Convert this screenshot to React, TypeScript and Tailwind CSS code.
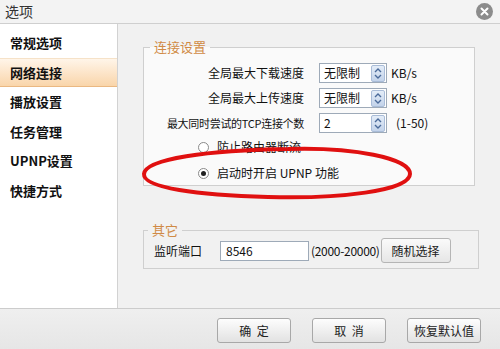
import React from "react";

const cjk = { fontFamily: '"Noto Sans CJK SC", "Liberation Sans", sans-serif' };

function Spinner() {
  return (
    <div className="flex h-[17px] w-[14px] flex-col items-center justify-center rounded-[2px] border border-[#a9bcd8] bg-gradient-to-b from-[#e4edf8] to-[#c3d3ea]">
      <svg width="8" height="13" viewBox="0 0 8 13">
        <path d="M1 5 L4 2 L7 5" fill="none" stroke="#4a6a9a" strokeWidth="1.4" />
        <path d="M1 8 L4 11 L7 8" fill="none" stroke="#4a6a9a" strokeWidth="1.4" />
      </svg>
    </div>
  );
}

function SpinBox({ value }: { value: string }) {
  return (
    <div className="flex h-[20px] w-[68px] items-center justify-between border border-[#9eaab8] bg-white pl-[4px] pr-[1px] text-[12px] text-[#111]">
      <span>{value}</span>
      <Spinner />
    </div>
  );
}

function Radio({ checked, label }: { checked?: boolean; label: string }) {
  return (
    <div className="flex items-center gap-[8px] pl-[54px] text-[12px] text-[#111]">
      <div className="flex h-[11px] w-[11px] items-center justify-center rounded-full border border-[#8a8a8a] bg-white">
        {checked && <div className="h-[5px] w-[5px] rounded-full bg-[#222]" />}
      </div>
      <span>{label}</span>
    </div>
  );
}

function Button({ children }: { children: React.ReactNode }) {
  return (
    <button className="flex h-[25px] w-[74px] items-center justify-center rounded-[3px] border border-[#a8a8a8] bg-gradient-to-b from-[#fdfdfd] to-[#e2e2e2] text-[12px] text-[#222]">
      {children}
    </button>
  );
}

export default function App() {
  const menu = ["常规选项", "网络连接", "播放设置", "任务管理", "UPNP设置", "快捷方式"];

  return (
    <div className="relative h-[349px] w-[500px] overflow-hidden bg-[#ececec]" style={cjk}>
      {/* Title bar */}
      <div className="flex h-[24px] items-center justify-between border-b border-[#cfcfcf] bg-[#f3f3f3] pl-[5px] pr-[7px]">
        <span className="text-[14px] text-[#333]">选项</span>
        <div className="flex h-[17px] w-[17px] items-center justify-center rounded-full bg-[#8c8c8c]">
          <svg width="9" height="9" viewBox="0 0 9 9">
            <path d="M1.5 1.5 L7.5 7.5 M7.5 1.5 L1.5 7.5" stroke="#fff" strokeWidth="2" strokeLinecap="round" />
          </svg>
        </div>
      </div>

      {/* Body */}
      <div className="flex h-[285px] border-b border-[#cccccc]">
        {/* Sidebar */}
        <div className="flex w-[118px] flex-col border-r border-[#d2d2d2] bg-white pt-[4px]">
          {menu.map((item) => (
            <div
              key={item}
              className={`flex h-[29.5px] items-center pl-[10px] text-[13px] font-bold text-[#111] ${
                item === "网络连接"
                  ? "border-y border-t-[#f6e2c8] border-b-[#eab882] bg-gradient-to-b from-[#fff5e9] to-[#f9d5aa]"
                  : ""
              }`}
            >
              {item}
            </div>
          ))}
        </div>

        {/* Content */}
        <div className="flex flex-1 flex-col bg-[#f1f1f1] pl-[25px] pt-[16px]">
          <fieldset className="h-[146px] w-[332px] border border-[#cfcfcf] bg-[#fafafa] px-0">
            <legend className="ml-[6px] px-[4px] text-[13px] leading-[14px] text-[#d08a45]">连接设置</legend>
            <div className="flex flex-col gap-[5px] pt-[9px]">
              {[
                { label: "全局最大下载速度", value: "无限制", unit: "KB/s", tight: false },
                { label: "全局最大上传速度", value: "无限制", unit: "KB/s", tight: false },
                { label: "最大同时尝试的TCP连接个数", value: "2", unit: "(1-50)", tight: true },
              ].map((r) => (
                <div key={r.label} className="flex items-center text-[12px] text-[#111]">
                  <span
                    className={`w-[175px] pr-[15px] text-right whitespace-nowrap ${
                      r.tight ? "text-[11px] tracking-[-0.3px]" : ""
                    }`}
                  >
                    {r.label}
                  </span>
                  <SpinBox value={r.value} />
                  <span className={r.unit === "KB/s" ? "pl-[4px]" : "pl-[9px]"}>{r.unit}</span>
                </div>
              ))}
            </div>
            <div className="flex flex-col gap-[8px] pt-[5px]">
              <Radio label="防止路由器断流" />
              <Radio checked label="启动时开启 UPNP 功能" />
            </div>
          </fieldset>

          <fieldset className="mt-[37px] h-[46px] w-[336px] border border-[#cfcfcf] px-0">
            <legend className="ml-[4px] px-[4px] text-[13px] leading-[14px] text-[#d08a45]">其它</legend>
            <div className="flex items-center pl-[10px] pt-[1px] text-[12px] text-[#111]">
              <span className="w-[66px]">监听端口</span>
              <div className="flex h-[20px] w-[89px] items-center border border-[#9eaab8] bg-white pl-[5px]">8546</div>
              <span className="pl-[2px] tracking-[-0.3px]">(2000-20000)</span>
              <button className="ml-[1px] flex h-[25px] w-[70px] items-center justify-center rounded-[3px] border border-[#b5b5b5] bg-gradient-to-b from-[#fafafa] to-[#e6e6e6] text-[12px] text-[#222]">
                随机选择
              </button>
            </div>
          </fieldset>
        </div>
      </div>

      {/* Footer buttons */}
      <div className="flex h-[40px] items-center justify-end gap-[21px] bg-gradient-to-b from-[#efefef] to-[#e6e6e6] pr-[19px] pt-[3px]">
        <Button>确&nbsp;&nbsp;定</Button>
        <Button>取&nbsp;&nbsp;消</Button>
        <Button>恢复默认值</Button>
      </div>

      {/* Red hand-drawn ellipse annotation */}
      <svg className="pointer-events-none absolute left-[138px] top-[144px]" width="278" height="58" viewBox="0 0 278 58">
        <path
          d="M150 5 C 215 3, 272 14, 272 30 C 272 47, 200 55, 130 53 C 60 51, 5 44, 6 30 C 7 15, 70 6, 150 5"
          fill="none"
          stroke="#e01010"
          strokeWidth="4"
        />
      </svg>
    </div>
  );
}
